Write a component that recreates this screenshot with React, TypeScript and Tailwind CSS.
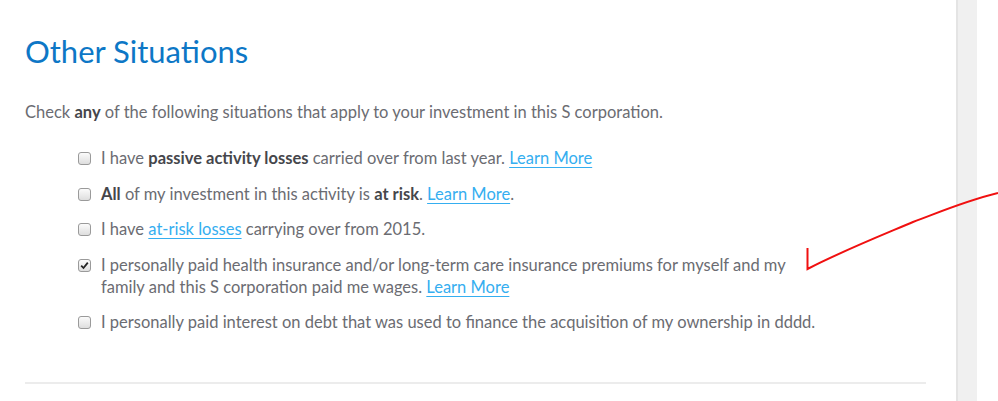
import React from "react";

function Box({ checked = false }: { checked?: boolean }) {
  return (
    <span className="mt-[5px] flex h-[13px] w-[13px] shrink-0 items-center justify-center rounded-[3px] border border-[#9a9a9a] bg-gradient-to-b from-[#fbfbfb] to-[#dedede]">
      {checked && (
        <svg width="9" height="9" viewBox="0 0 9 9">
          <path d="M1.2 4.6 L3.5 7 L7.8 1.6" fill="none" stroke="#222" strokeWidth="1.8" />
        </svg>
      )}
    </span>
  );
}

const Link = ({ children }: { children: React.ReactNode }) => (
  <a className="text-[#35aef0] underline underline-offset-[3px] decoration-1">{children}</a>
);

const B = ({ children }: { children: React.ReactNode }) => (
  <b className="font-bold text-[#45464b]">{children}</b>
);

export default function App() {
  return (
    <div className="relative flex h-[401px] w-[998px] overflow-hidden bg-white font-['Lato',sans-serif] text-[16.5px] text-[#6b6c72]">
      <div className="w-[956px] shrink-0 pl-[25px] pr-[30px]">
        <h1 className="mt-[32px] text-[31px] leading-[38px] text-[#0d77c6]">Other Situations</h1>
        <p className="mt-[31px] leading-[22px]">
          Check <B>any</B> of the following situations that apply to your investment in this S corporation.
        </p>
        <div className="mt-[24px] flex flex-col gap-[13.5px] pl-[53px] pr-[100px]">
          <label className="flex gap-[10px] leading-[22px]">
            <Box />
            <span>
              I have <B>passive activity losses</B> carried over from last year. <Link>Learn More</Link>
            </span>
          </label>
          <label className="flex gap-[10px] leading-[22px]">
            <Box />
            <span>
              <B>All</B> of my investment in this activity is <B>at risk</B>. <Link>Learn More</Link>.
            </span>
          </label>
          <label className="flex gap-[10px] leading-[22px]">
            <Box />
            <span>
              I have <Link>at-risk losses</Link> carrying over from 2015.
            </span>
          </label>
          <label className="flex gap-[10px] leading-[22px]">
            <Box checked />
            <span className="max-w-[700px]">
              I personally paid health insurance and/or long-term care insurance premiums for myself and my family and this S corporation paid me wages. <Link>Learn More</Link>
            </span>
          </label>
          <label className="flex gap-[10px] leading-[22px] whitespace-nowrap">
            <Box />
            <span>
              I personally paid interest on debt that was used to finance the acquisition of my ownership in dddd.
            </span>
          </label>
        </div>
        <div className="mt-[49px] h-[2px] w-[901px] bg-[#ececec]" />
      </div>
      <div className="h-full w-[21px] shrink-0 border-l-2 border-[#e4e4e4] bg-[#f0f0f0]" />
      <div className="flex-1 bg-white" />
      <svg className="pointer-events-none absolute left-0 top-0" width="998" height="401">
        <path d="M807.5 248 L807.5 269 C840 252 880 236 913 222 C940 212 965 201 998 193" fill="none" stroke="#f01010" strokeWidth="2" />
      </svg>
    </div>
  );
}
